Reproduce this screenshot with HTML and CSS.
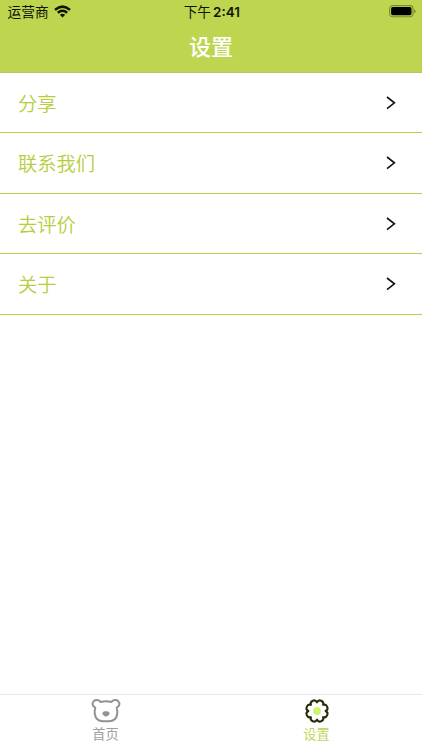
FILE: index.html
```html
<!DOCTYPE html>
<html lang="zh-CN">
<head>
<meta charset="utf-8">
<title>设置</title>
<link rel="stylesheet" href="styles.css">
</head>
<body>
<div class="app">
  <header class="header">
    <div class="status">
      <div class="carrier"><span class="label">运营商</span>
        <svg width="17" height="13" viewBox="0 0 17 13" fill="none" stroke="#111405" stroke-width="2.5"><path d="M1 4.9Q8.5-1.7 16 4.9M3.8 7.8Q8.5 3.8 13.2 7.8"/><path d="M8.5 12.5L5.8 9.7Q8.5 7.7 11.2 9.7Z" fill="#111405" stroke="none"/></svg>
      </div>
      <div class="clock label">下午 <b>2:41</b></div>
      <div class="battery">
        <svg width="27" height="13" viewBox="0 0 27 13"><rect x=".6" y=".6" width="23.4" height="11.2" rx="3.2" fill="none" stroke="#7b8b32" stroke-width="1.1"/><rect x="2.1" y="2.1" width="20.4" height="8.2" rx="1.7" fill="#000"/><path d="M25 4.2Q26.7 5 26.7 6.2T25 8.2Z" fill="#7b8b32"/></svg>
      </div>
    </div>
    <h1 class="title">设置</h1>
  </header>
  <main class="list">
    <div class="row"><span>分享</span><svg class="arrow" viewBox="0 0 10 14"><path d="M1 1L8.4 6.8L1 12.6"/></svg></div>
    <div class="row"><span>联系我们</span><svg class="arrow" viewBox="0 0 10 14"><path d="M1 1L8.4 6.8L1 12.6"/></svg></div>
    <div class="row"><span>去评价</span><svg class="arrow" viewBox="0 0 10 14"><path d="M1 1L8.4 6.8L1 12.6"/></svg></div>
    <div class="row"><span>关于</span><svg class="arrow" viewBox="0 0 10 14"><path d="M1 1L8.4 6.8L1 12.6"/></svg></div>
  </main>
  <nav class="tabs">
    <div class="tab">
      <svg width="30" height="26" viewBox="0 0 30 26"><path d="M9.5 3.9Q15 2.8 20.5 3.9C22 1.5 25.3 1.3 27.2 3.1C29.3 5.3 28.5 8.5 25.7 9.7C26.4 12 26.6 14 26.2 16C25.5 20.5 22.5 23.2 18 23.2H12C7.5 23.2 4.5 20.5 3.8 16C3.4 14 3.6 12 4.3 9.7C1.5 8.5.7 5.3 2.8 3.1C4.7 1.3 8 1.5 9.5 3.9Z" fill="none" stroke="#929292" stroke-width="2" stroke-linejoin="round"/><path d="M11.5 15.2C11.5 12.7 18.5 12.7 18.5 15.2C18.5 17 16.4 18.6 15 18.6S11.5 17 11.5 15.2Z" fill="#929292"/></svg>
      <span>首页</span>
    </div>
    <div class="tab active">
      <svg width="30" height="26" viewBox="-15 -13 30 26"><path d="M0-8.6A3.3 3.3 0 0 1 6.1-6.1A3.3 3.3 0 0 1 8.6 0A3.3 3.3 0 0 1 6.1 6.1A3.3 3.3 0 0 1 0 8.6A3.3 3.3 0 0 1-6.1 6.1A3.3 3.3 0 0 1-8.6 0A3.3 3.3 0 0 1-6.1-6.1A3.3 3.3 0 0 1 0-8.6Z" fill="none" stroke="#252b08" stroke-width="2" stroke-linejoin="round"/><circle r="3.9" fill="#cdf76b"/></svg>
      <span>设置</span>
    </div>
  </nav>
</div>
</body>
</html>
```
FILE: styles.css
```css
* { box-sizing: border-box; }
body { margin: 0; background: #fff; font-family: "Noto Sans CJK SC", sans-serif; }
.app { height: 750px; display: flex; flex-direction: column; overflow: hidden; }
.header { height: 72.5px; background: #bed54f; flex: none; border-bottom: 1px solid #b6c56b; }
.status { height: 23px; display: grid; grid-template-columns: 1fr auto 1fr; align-items: center; padding: 0 6px 0 7.5px; color: #111405; font-size: 13.7px; line-height: 20px; }
.label { padding-bottom: 1px; }
.carrier { display: flex; align-items: center; gap: 5px; }
.carrier .label { padding-bottom: 2px; }
.battery { display: flex; justify-content: flex-end; }
.clock b { font-family: Inter, sans-serif; font-weight: 600; font-size: 13.4px; margin-left: -1px; }
.title { margin: 6px 0 0; text-align: center; font-size: 22px; line-height: 32px; font-weight: 500; color: #fff; }
.list { flex: 1; }
.row { height: 60.6px; border-bottom: 1px solid #b8cf4c; display: flex; align-items: center; justify-content: space-between; padding: .7px 26px 0 18px; font-size: 19.3px; line-height: 28px; font-weight: 350; color: #b4ce40; }
.arrow { width: 10px; height: 14px; fill: none; stroke: #111; stroke-width: 1.6; }
.tabs { height: 56px; flex: none; display: flex; border-top: 1px solid #e9e9e9; }
.tab { flex: 1; display: flex; flex-direction: column; align-items: center; padding: 3px 0 0; font-size: 13.2px; line-height: 20px; color: #a0a0a0; font-weight: 400; }
.tab svg { flex: none; }
.tab.active { color: #bdd659; }
```
